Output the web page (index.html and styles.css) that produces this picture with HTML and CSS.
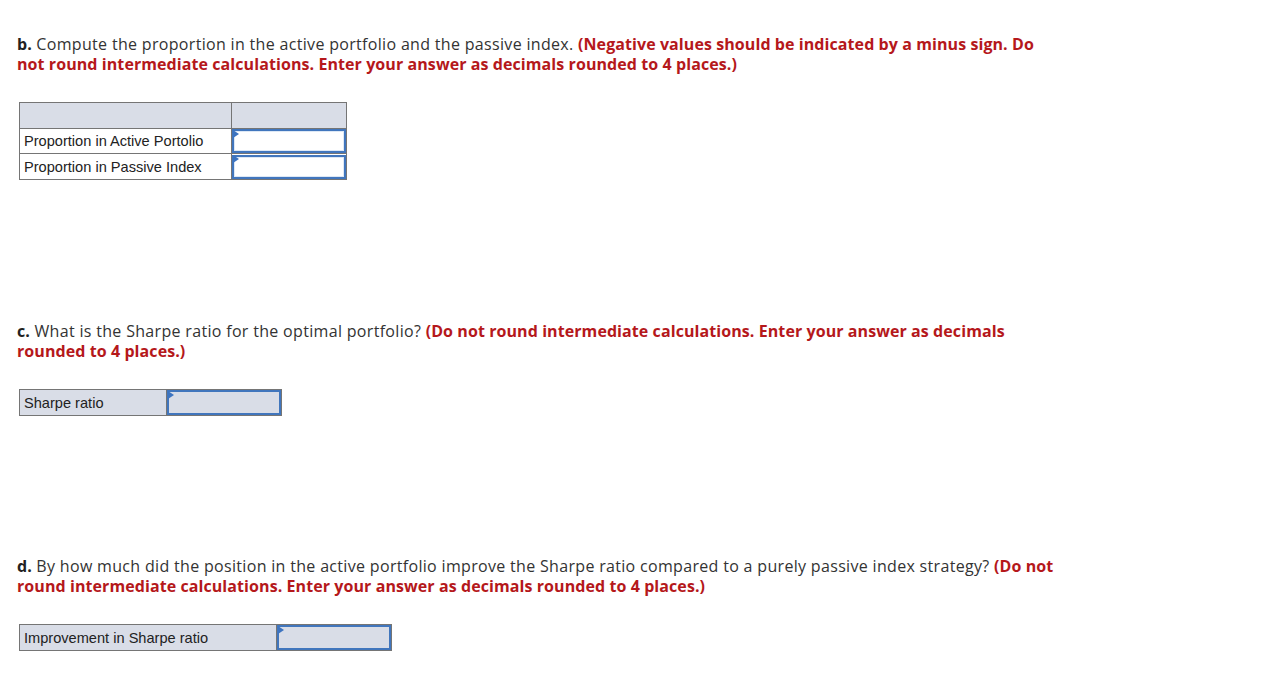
FILE: index.html
```html
<!DOCTYPE html>
<html>
<head>
<meta charset="utf-8">
<link rel="stylesheet" href="styles.css">
</head>
<body>
<div class="page">
  <section class="part">
    <p class="q"><b>b.</b> Compute the proportion in the active portfolio and the passive index. <strong>(Negative values should be indicated by a minus sign. Do not round intermediate calculations. Enter your answer as decimals rounded to 4 places.)</strong></p>
    <table class="grid">
      <tr class="head"><td class="lab w-b"></td><td class="val"></td></tr>
      <tr><td class="lab">Proportion in Active Portolio</td><td class="inp"><span class="box"></span></td></tr>
      <tr class="last"><td class="lab">Proportion in Passive Index</td><td class="inp"><span class="box"></span></td></tr>
    </table>
  </section>
  <section class="part">
    <p class="q"><b>c.</b> What is the Sharpe ratio for the optimal portfolio? <strong>(Do not round intermediate calculations. Enter your answer as decimals rounded to 4 places.)</strong></p>
    <table class="grid shade">
      <tr><td class="lab w-c">Sharpe ratio</td><td class="inp"><span class="box"></span></td></tr>
    </table>
  </section>
  <section class="part part-d">
    <p class="q"><b>d.</b> By how much did the position in the active portfolio improve the Sharpe ratio compared to a purely passive index strategy? <strong>(Do not round intermediate calculations. Enter your answer as decimals rounded to 4 places.)</strong></p>
    <table class="grid shade">
      <tr><td class="lab w-d">Improvement in Sharpe ratio</td><td class="inp"><span class="box"></span></td></tr>
    </table>
  </section>
</div>
</body>
</html>
```
FILE: styles.css
```css
html, body { margin: 0; padding: 0; background: #fff; }
.page {
  padding: 34px 0 0 17px;
  width: 1040px;
  font-family: "Open Sans", "Liberation Sans", sans-serif;
  color: #333;
}
.part { display: flex; flex-direction: column; align-items: flex-start; gap: 28px; }
.part + .part { margin-top: 141px; }
.part + .part-d { margin-top: 140px; }
.q { margin: 0; font-size: 16px; line-height: 20px; letter-spacing: 0.32px; }
.q b { color: #222; font-weight: 700; letter-spacing: 0.1px; }
.q strong { color: #b5181b; font-weight: 700; letter-spacing: 0.08px; }
.grid {
  border-collapse: collapse;
  margin-left: 2px;
  font-family: "Liberation Sans", Arial, sans-serif;
  font-size: 14.6px;
  color: #222;
}
.grid td {
  border: 1px solid #757575;
  height: 24px;
  padding: 0;
}
.grid .head td { background: #d9dde7; height: 25px; }
.grid .last td { height: 25px; }
.shade td { height: 25px; background: #d9dde7; }
.lab { padding: 0 4px !important; text-align: left; }
.w-b { width: 203px; }
.w-c { width: 138px; }
.w-d { width: 248px; }
.val { width: 114px; }
.inp { width: 114px; position: relative; background: #fff; }
.box {
  display: block;
  height: 20px;
  border: 2px solid #4176bd;
  box-shadow: inset 0 0 0 1px #dde8f5;
}
.shade .box { height: 21px; box-shadow: none; }
.box::before {
  content: "";
  position: absolute;
  left: 1px;
  top: 1px;
  border-left: 6px solid #3d74c0;
  border-top: 4px solid transparent;
  border-bottom: 4px solid transparent;
}
```
